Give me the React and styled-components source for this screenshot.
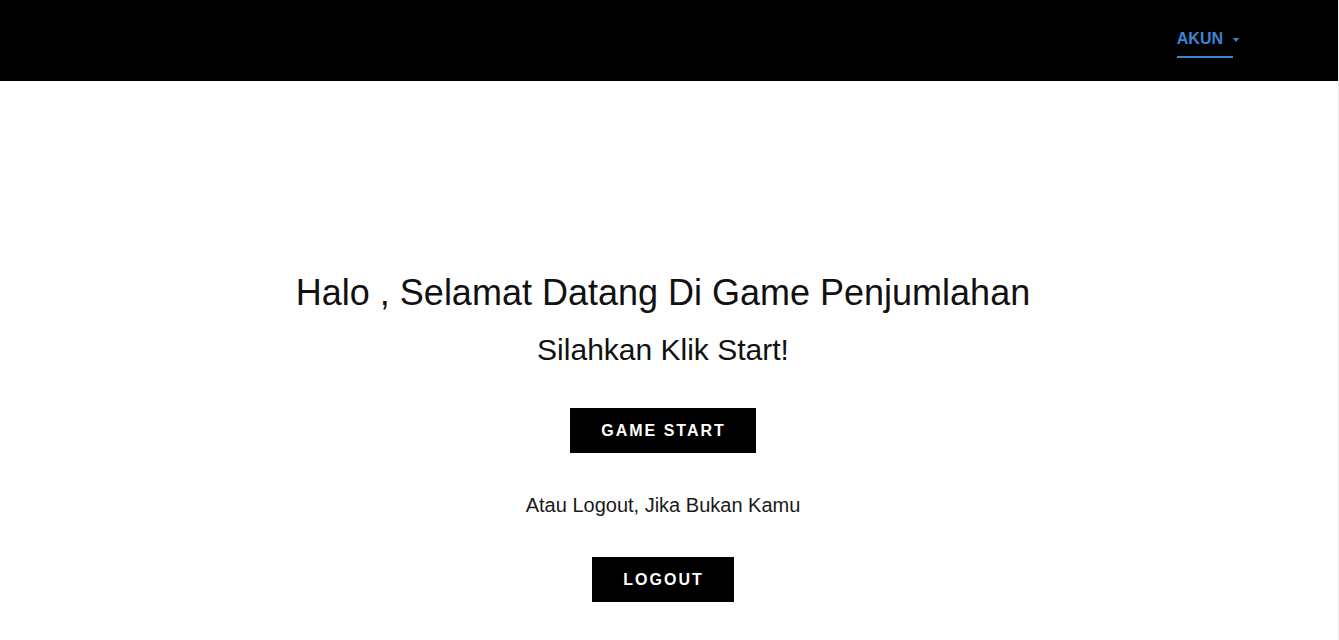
import React from "react";
import styled, { createGlobalStyle } from "styled-components";

const GlobalStyle = createGlobalStyle`
  html, body {
    margin: 0;
    padding: 0;
    background: #fff;
  }
  body {
    font-family: "Liberation Sans", Arial, sans-serif;
    color: #111;
  }
`;

const Page = styled.div`
  min-height: 100vh;
  box-sizing: border-box;
  border-right: 1px solid #ececec;
`;

const Navbar = styled.nav`
  height: 81px;
  background: #000;
  display: flex;
  justify-content: flex-end;
  align-items: flex-start;
  padding-right: 99px;
`;

const AccountMenu = styled.button`
  margin-top: 29px;
  display: flex;
  align-items: center;
  gap: 10px;
  background: none;
  border: none;
  padding: 0;
  cursor: pointer;
  font-family: "Liberation Sans", Arial, sans-serif;
  font-weight: 700;
  font-size: 16px;
  color: #3f83d8;
  position: relative;
  height: 20px;

  &::after {
    content: "";
    position: absolute;
    left: 0;
    right: 6px;
    top: 27px;
    height: 2px;
    background: #3f83d8;
  }
`;

const Caret = styled.span`
  width: 0;
  height: 0;
  border-left: 3.5px solid transparent;
  border-right: 3.5px solid transparent;
  border-top: 4px solid #3f83d8;
  margin-top: 1px;
`;

const Main = styled.main`
  display: flex;
  flex-direction: column;
  align-items: center;
  padding: 191px 12px 0 0;
  text-align: center;
`;

const Title = styled.h1`
  margin: 0;
  font-size: 36px;
  font-weight: 400;
  color: #111;
`;

const Subtitle = styled.h2`
  margin: 19px 0 0;
  font-size: 30px;
  font-weight: 400;
  color: #111;
`;

const Note = styled.p`
  margin: 41px 0 0;
  font-size: 20px;
  color: #1a1a1a;
`;

const ActionButton = styled.button`
  margin-top: ${(p) => p.$top}px;
  height: 45px;
  padding: 0 30px 0 31px;
  background: #000;
  color: #fff;
  border: none;
  font-family: "Liberation Sans", Arial, sans-serif;
  font-weight: 700;
  font-size: 16px;
  letter-spacing: 2px;
  cursor: pointer;
`;

export default function App() {
  return (
    <Page>
      <GlobalStyle />
      <Navbar>
        <AccountMenu>
          AKUN
          <Caret />
        </AccountMenu>
      </Navbar>
      <Main>
        <Title>Halo , Selamat Datang Di Game Penjumlahan</Title>
        <Subtitle>Silahkan Klik Start!</Subtitle>
        <ActionButton $top={41}>GAME START</ActionButton>
        <Note>Atau Logout, Jika Bukan Kamu</Note>
        <ActionButton $top={40}>LOGOUT</ActionButton>
      </Main>
    </Page>
  );
}
